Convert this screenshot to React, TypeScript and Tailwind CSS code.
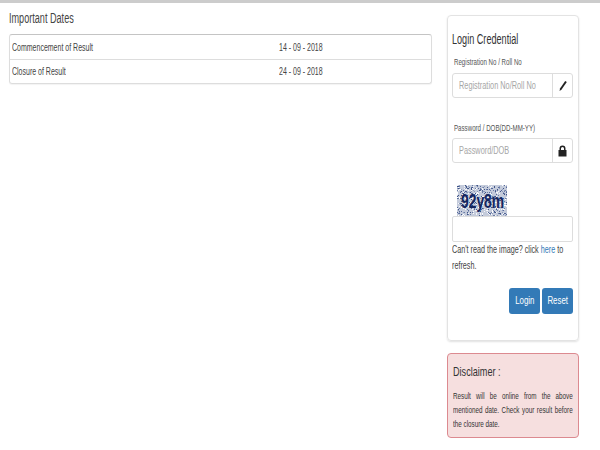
import type { ReactNode } from 'react'

const font = { fontFamily: '"Liberation Sans", Arial, sans-serif' }

const dates = [
  { label: 'Commencement of Result', value: '14 - 09 - 2018' },
  { label: 'Closure of Result', value: '24 - 09 - 2018' },
]

// the screenshot was squeezed sideways, so all the text is narrow
const Narrow = ({ children }: { children: ReactNode }) => (
  <span className="inline-block origin-left scale-x-[0.7] whitespace-nowrap">{children}</span>
)

// seeded so the speckle stays the same on each render
const speckle = (() => {
  const dots: { x: number; y: number; fill: string }[] = []
  const fills = ['#3f5488', '#6b7da6', '#8d9bbb', '#f5f6f9', '#ffffff', '#55689a']
  let seed = 7
  const next = () => {
    seed = (seed * 1103515245 + 12345) % 2147483648
    return seed / 2147483648
  }
  for (let i = 0; i < 520; i++) {
    dots.push({ x: Math.floor(next() * 50), y: Math.floor(next() * 31), fill: fills[Math.floor(next() * fills.length)] })
  }
  return dots
})()

const Captcha = () => (
  <div className="relative ml-[5px] h-[31px] w-[50px] overflow-hidden bg-[#c4cbdb]">
    <svg className="absolute inset-0" width="50" height="31" aria-hidden="true">
      {speckle.map((d, i) => (
        <rect key={i} x={d.x} y={d.y} width="1" height="1" fill={d.fill} />
      ))}
    </svg>
    <span className="absolute left-[4px] top-[4px] origin-left scale-x-[0.66] text-[21px] leading-[24px] font-bold text-[#14265f]">
      92y8m
    </span>
  </div>
)

const InputGroup = ({ placeholder, icon }: { placeholder: string; icon: ReactNode }) => (
  <div className="flex h-[25px] rounded-[3px] border border-[#ddd]">
    <div className="flex-1 overflow-hidden pl-[6px] text-[10.5px] leading-[23px] text-[#a6a6a6]">
      <Narrow>{placeholder}</Narrow>
    </div>
    <div className="flex w-[20px] items-center justify-center border-l border-[#ddd] text-[#222]">{icon}</div>
  </div>
)

const App = () => {
  return (
    <div style={font} className="h-[450px] w-[600px] overflow-hidden bg-white text-[#333]">
      <div className="h-[3px] bg-[#cccccc]" />
      <div className="flex">
        <div className="ml-[9px] w-[423px]">
          <h3 className="mt-[7px] text-[14px] leading-[16px] text-[#444]">
            <span className="inline-block origin-left scale-x-[0.65] whitespace-nowrap">Important Dates</span>
          </h3>
          <div className="mt-[8px] rounded-[3px] border border-[#ddd] border-t-[#c4c4c4] shadow-[0_1px_1px_rgba(0,0,0,0.05)]">
            {dates.map((d, i) => (
              <div
                key={d.label}
                className={`flex h-[24px] items-center pl-[2px] text-[10px] text-[#444] ${i > 0 ? 'border-t border-[#ddd]' : ''}`}
              >
                <span className="w-[267px]">
                  <Narrow>{d.label}</Narrow>
                </span>
                <span>
                  <Narrow>{d.value}</Narrow>
                </span>
              </div>
            ))}
          </div>
        </div>

        <div className="ml-[15px] w-[132px]">
          <div className="mt-[12px] h-[326px] rounded-[4px] border border-[#e3e3e3] pl-[4px] pr-[5px] shadow-[0_1px_2px_rgba(0,0,0,0.12)]">
            <h4 className="mt-[15px] text-[14px] leading-[16px] text-[#333]">
              <span className="inline-block origin-left scale-x-[0.65] whitespace-nowrap">Login Credential</span>
            </h4>
            <label className="mt-[9px] ml-[2px] block text-[8.8px] leading-[12px] text-[#555]">
              <Narrow>Registration No / Roll No</Narrow>
            </label>
            <div className="mt-[5px]">
              <InputGroup
                placeholder="Registration No/Roll No"
                icon={
                  <svg width="10" height="12" viewBox="0 0 10 12" aria-hidden="true">
                    <path d="M7.2 1 L8.8 2 L3.6 9.6 L1.6 11 L2 8.6 Z" fill="currentColor" />
                  </svg>
                }
              />
            </div>
            <label className="mt-[24px] ml-[2px] block text-[8.8px] leading-[12px] text-[#555]">
              <Narrow>Password / DOB(DD-MM-YY)</Narrow>
            </label>
            <div className="mt-[4px]">
              <InputGroup
                placeholder="Password/DOB"
                icon={
                  <svg width="9" height="12" viewBox="0 0 9 12" aria-hidden="true">
                    <path d="M1.5 5 V3.5 a3 3 0 0 1 6 0 V5 H8.5 V11.5 H0.5 V5 Z M3 5 H6 V3.5 a1.5 1.5 0 0 0 -3 0 Z" fill="currentColor" fillRule="evenodd" />
                  </svg>
                }
              />
            </div>
            <div className="mt-[22px]">
              <Captcha />
            </div>
            <div className="h-[26px] rounded-[2px] border border-[#ddd]" />
            <div className="text-[10.3px] leading-[16px] text-[#444]">
              <div>
                <Narrow>
                  Can't read the image? click <span className="text-[#337ab7]">here</span> to
                </Narrow>
              </div>
              <div>
                <Narrow>refresh.</Narrow>
              </div>
            </div>
            <div className="mt-[14px] flex justify-end gap-[2px]">
              <button className="h-[26px] w-[31px] rounded-[3px] bg-[#337ab7] text-[10.5px] text-white">
                <span className="inline-block scale-x-[0.75]">Login</span>
              </button>
              <button className="h-[26px] w-[31px] rounded-[3px] bg-[#337ab7] text-[10.5px] text-white">
                <span className="inline-block scale-x-[0.75]">Reset</span>
              </button>
            </div>
          </div>

          <div className="mt-[12px] h-[85px] rounded-[4px] border border-[#dc8a90] bg-[#f6dfdf] pl-[5px]">
            <h4 className="mt-[10px] text-[13px] leading-[16px] text-[#333]">
              <Narrow>Disclaimer :</Narrow>
            </h4>
            <p className="mt-[9px] w-[171px] origin-left scale-x-[0.7] text-justify text-[9px] leading-[14px] text-[#333]">
              Result will be online from the above mentioned date. Check your result before the closure date.
            </p>
          </div>
        </div>
      </div>
    </div>
  )
}

export default App
